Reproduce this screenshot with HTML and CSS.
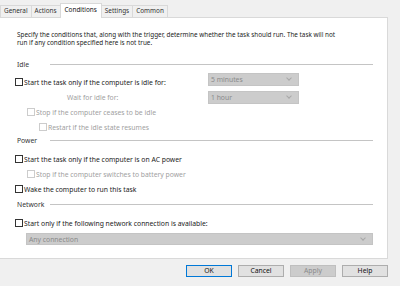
FILE: index.html
```html
<!DOCTYPE html>
<html>
<head>
  <title>Task Properties</title>
  <link rel="stylesheet" href="styles.css">
</head>
<body>
  <div class="tabs">
    <div class="tab">General</div>
    <div class="tab">Actions</div>
    <div class="tab active">Conditions</div>
    <div class="tab">Settings</div>
    <div class="tab">Common</div>
  </div>

  <div class="panel">
    <p class="intro">Specify the conditions that, along with the trigger, determine whether the task should run. The task will not run if any condition specified here is not true.</p>

    <!-- Idle -->
    <div class="group first"><span>Idle</span><div class="rule"></div></div>
    <div class="row">
      <label class="check"><span class="box"></span>Start the task only if the computer is idle for:</label>
      <div class="select"><span>5 minutes</span><span class="arrow"></span></div>
    </div>
    <div class="row">
      <span class="wait">Wait for idle for:</span>
      <div class="select"><span>1 hour</span><span class="arrow"></span></div>
    </div>
    <label class="check off indent1 tight"><span class="box"></span>Stop if the computer ceases to be idle</label>
    <label class="check off indent2"><span class="box"></span>Restart if the idle state resumes</label>

    <!-- Power -->
    <div class="group"><span>Power</span><div class="rule"></div></div>
    <label class="check gap"><span class="box"></span>Start the task only if the computer is on AC power</label>
    <label class="check off indent1"><span class="box"></span>Stop if the computer switches to battery power</label>
    <label class="check"><span class="box"></span>Wake the computer to run this task</label>

    <!-- Network -->
    <div class="group net"><span>Network</span><div class="rule"></div></div>
    <label class="check gap"><span class="box"></span>Start only if the following network connection is available:</label>
    <div class="select wide"><span>Any connection</span><span class="arrow"></span></div>
  </div>

  <div class="buttons">
    <button class="default">OK</button>
    <button>Cancel</button>
    <button disabled>Apply</button>
    <button>Help</button>
  </div>
</body>
</html>
```

FILE: styles.css
```css
/* dialog look */
body {
  margin: 0;
  background-color: #f0f0f0;
  font-family: "Noto Sans", sans-serif;
  font-size: 6.8px;
  color: #1a1a1a;
}
.tabs {
  display: flex;
  align-items: flex-end;
  height: 17px;
  padding-left: 0;
  font-size: 6.4px;
}
.tab {
  height: 11px;
  line-height: 10px;
  padding: 0 3px;
  border: 1px solid #d9d9d9;
  border-bottom: none;
  margin-right: -1px;
  background-color: #f0f0f0;
  color: #333;
}
.tab.active {
  height: 14px;
  line-height: 12px;
  padding: 0 4px;
  background-color: #fff;
  position: relative;
  top: 1px;
  z-index: 1;
  color: #111;
}
.panel {
  background-color: #fff;
  border: 1px solid #d9d9d9;
  border-left: none;
  margin-right: 12px;
  height: 242px;
  padding: 0 14px 0 15px;
  box-sizing: border-box;
}
.intro {
  margin: 13px 0 0 2px;
  width: 326px;
  font-size: 6.35px;
  line-height: 7.5px;
  color: #222;
}
.group {
  display: flex;
  align-items: center;
  margin-top: 4px;
  height: 8px;
  color: #333;
}
.group.first {
  margin-top: 14px;
}
.group.net {
  margin-top: 6px;
}
.group span {
  width: 33px;
  padding-left: 2px;
}
.rule {
  flex: 1;
  height: 1px;
  background-color: #c4c4c4;
}
.row {
  display: flex;
  align-items: center;
  justify-content: space-between;
  margin-right: 74px;
  margin-top: 5px;
  height: 13px;
}
.check {
  display: flex;
  align-items: center;
  height: 10px;
  margin-top: 5px;
}
.check.gap {
  margin-top: 10px;
}
.check.tight {
  margin-top: 3px;
}
.box {
  width: 6px;
  height: 6px;
  border: 1px solid #333;
  margin-right: 1px;
  background-color: #fff;
  flex-shrink: 0;
}
.check.off {
  color: #a0a0a0;
}
.check.off .box {
  border-color: #cccccc;
}
.indent1 {
  margin-left: 12px;
}
.indent2 {
  margin-left: 24px;
}
.wait {
  margin-left: 52px;
  color: #a0a0a0;
}
.select {
  display: flex;
  align-items: center;
  justify-content: space-between;
  width: 91px;
  height: 13px;
  padding: 0 7px 0 2px;
  box-sizing: border-box;
  background-color: #cccccc;
  border: 1px solid #c4c4c4;
  color: #8a8a8a;
}
.select.wide {
  width: auto;
  height: 12px;
  margin: 5px 0 0 11px;
}
.arrow {
  width: 3px;
  height: 3px;
  border-right: 1px solid #a8a8a8;
  border-bottom: 1px solid #a8a8a8;
  transform: rotate(45deg);
  margin-top: -3px;
}
.buttons {
  display: flex;
  justify-content: flex-end;
  gap: 6px;
  padding-right: 12px;
  margin-top: 6px;
}
button {
  width: 46px;
  height: 12px;
  padding: 0;
  font-family: "Noto Sans", sans-serif;
  font-size: 6.8px;
  line-height: 10px;
  background-color: #e1e1e1;
  border: 1px solid #adadad;
  color: #111;
}
button.default {
  border-color: #0078d7;
}
button:disabled {
  background-color: #cccccc;
  border-color: #bfbfbf;
  color: #8a8a8a;
}
```
